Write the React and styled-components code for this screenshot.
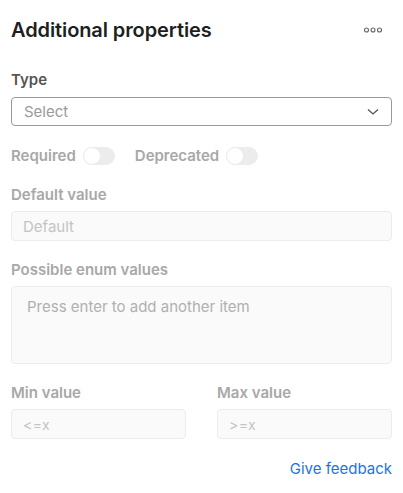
import styled, { createGlobalStyle } from "styled-components";

const GlobalStyle = createGlobalStyle`
  body {
    margin: 0;
    background: #fff;
    font-family: Inter, "Noto Sans", sans-serif;
  }
`;

const Panel = styled.div`
  padding: 19px 11px 0 11px;
`;

const Header = styled.div`
  display: flex;
  align-items: center;
  justify-content: space-between;
  height: 24px;
  margin-top: -1px;
`;

const Title = styled.h2`
  margin: 0;
  font-size: 20px;
  font-weight: 600;
  color: #1f1f1f;
  letter-spacing: -0.1px;
`;

const MoreButton = styled.button`
  border: 0;
  background: none;
  padding: 0;
  margin-right: 10px;
  display: flex;
  align-items: center;
  cursor: pointer;
`;

const Field = styled.div`
  display: flex;
  flex-direction: column;
  margin-top: ${(p) => p.$top || 19}px;
  flex: 1;
`;

const Label = styled.label`
  font-size: 15px;
  font-weight: 600;
  line-height: 20px;
  color: ${(p) => (p.$active ? "#555" : "#a8a8a8")};
`;

const SelectBox = styled.div`
  margin-top: 7px;
  height: 29px;
  box-sizing: border-box;
  border: 1px solid #999;
  border-radius: 4px;
  display: flex;
  align-items: center;
  justify-content: space-between;
  padding: 0 12px 0 12px;
  font-size: 15px;
  color: #9a9a9a;
`;

const Input = styled.div`
  margin-top: 6px;
  height: ${(p) => p.$height || 30}px;
  box-sizing: border-box;
  background: #fafafa;
  border: 1px solid #ececec;
  border-radius: 4px;
  padding: ${(p) => (p.$area ? "10px 15px" : "0 11px")};
  display: flex;
  align-items: ${(p) => (p.$area ? "flex-start" : "center")};
  font-size: ${(p) => (p.$small ? 14 : 15)}px;
  color: ${(p) => (p.$area ? "#b0b0b0" : "#c4c4c4")};
  letter-spacing: ${(p) => (p.$small ? "0.5px" : "0")};
`;

const ToggleRow = styled.div`
  display: flex;
  align-items: center;
  height: 20px;
  margin-top: 20px;
  gap: 20px;
`;

const ToggleItem = styled.div`
  display: flex;
  align-items: center;
  gap: 7px;
`;

const Track = styled.span`
  width: 32px;
  height: 18px;
  border-radius: 9px;
  background: #ececec;
  position: relative;
  display: inline-block;
  &::after {
    content: "";
    position: absolute;
    left: 0;
    top: 0;
    width: 16px;
    height: 16px;
    border-radius: 50%;
    background: #fff;
    border: 1px solid #ececec;
  }
`;

const Row = styled.div`
  display: flex;
  gap: 31px;
`;

const Footer = styled.div`
  display: flex;
  justify-content: flex-end;
  margin-top: 20px;
  line-height: 20px;
`;

const FeedbackLink = styled.a`
  font-size: 15px;
  color: #1a73e8;
  text-decoration: none;
`;

function Toggle({ label }) {
  return (
    <ToggleItem>
      <Label>{label}</Label>
      <Track />
    </ToggleItem>
  );
}

export default function App() {
  return (
    <Panel>
      <GlobalStyle />
      <Header>
        <Title>Additional properties</Title>
        <MoreButton>
          <svg width="18" height="6" viewBox="0 0 18 6" fill="none" stroke="#666" strokeWidth="1.1">
            <circle cx="2.5" cy="3" r="2" />
            <circle cx="9" cy="3" r="2" />
            <circle cx="15.5" cy="3" r="2" />
          </svg>
        </MoreButton>
      </Header>

      <Field $top={28}>
        <Label $active>Type</Label>
        <SelectBox>
          Select
          <svg width="12" height="8" viewBox="0 0 12 8" fill="none" stroke="#555" strokeWidth="1.3">
            <path d="M1 1.5 L6 6 L11 1.5" />
          </svg>
        </SelectBox>
      </Field>

      <ToggleRow>
        <Toggle label="Required" />
        <Toggle label="Deprecated" />
      </ToggleRow>

      <Field>
        <Label>Default value</Label>
        <Input>Default</Input>
      </Field>

      <Field>
        <Label>Possible enum values</Label>
        <Input $area $height={78}>Press enter to add another item</Input>
      </Field>

      <Row>
        <Field>
          <Label>Min value</Label>
          <Input $small>&lt;=x</Input>
        </Field>
        <Field>
          <Label>Max value</Label>
          <Input $small>&gt;=x</Input>
        </Field>
      </Row>

      <Footer>
        <FeedbackLink href="#">Give feedback</FeedbackLink>
      </Footer>
    </Panel>
  );
}
